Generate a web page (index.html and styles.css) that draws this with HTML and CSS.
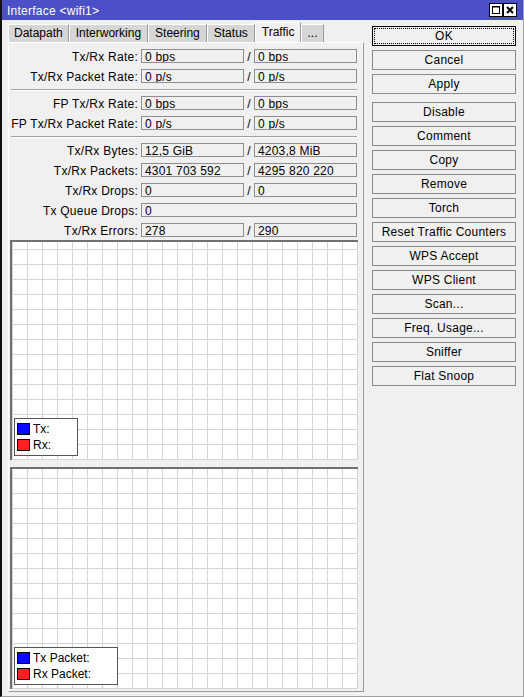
FILE: index.html
```html
<!DOCTYPE html>
<html>
<head>
<meta charset="utf-8">
<title>Interface &lt;wifi1&gt;</title>
<link rel="stylesheet" href="styles.css">
</head>
<body>
<div class="win">
  <div class="titlebar">
    <span class="title">Interface &lt;wifi1&gt;</span>
    <div class="tb-btns">
      <span class="tb-btn"><svg width="12" height="12" viewBox="0 0 12 12"><rect x="2.5" y="2.5" width="7" height="7" fill="none" stroke="#000" stroke-width="1"/><line x1="2" y1="3" x2="10" y2="3" stroke="#000" stroke-width="1"/></svg></span>
      <span class="tb-btn"><svg width="12" height="12" viewBox="0 0 12 12"><path d="M3 3 L9 9 M9 3 L3 9" stroke="#000" stroke-width="2" fill="none"/></svg></span>
    </div>
  </div>
  <div class="main">
    <div class="left">
      <div class="tabs">
        <div class="tab first">Datapath</div>
        <div class="tab">Interworking</div>
        <div class="tab">Steering</div>
        <div class="tab">Status</div>
        <div class="tab active">Traffic</div>
        <div class="tab more">...</div>
      </div>
      <div class="panel">
        <div class="rows">
          <div class="row"><div class="lbl">Tx/Rx Rate:</div><div class="fld">0 bps</div><div class="slash">/</div><div class="fld">0 bps</div></div>
          <div class="row"><div class="lbl">Tx/Rx Packet Rate:</div><div class="fld">0 p/s</div><div class="slash">/</div><div class="fld">0 p/s</div></div>
          <div class="sep"></div>
          <div class="row"><div class="lbl">FP Tx/Rx Rate:</div><div class="fld">0 bps</div><div class="slash">/</div><div class="fld">0 bps</div></div>
          <div class="row"><div class="lbl">FP Tx/Rx Packet Rate:</div><div class="fld">0 p/s</div><div class="slash">/</div><div class="fld">0 p/s</div></div>
          <div class="sep"></div>
          <div class="row"><div class="lbl">Tx/Rx Bytes:</div><div class="fld">12,5 GiB</div><div class="slash">/</div><div class="fld">4203,8 MiB</div></div>
          <div class="row"><div class="lbl">Tx/Rx Packets:</div><div class="fld">4301 703 592</div><div class="slash">/</div><div class="fld">4295 820 220</div></div>
          <div class="row"><div class="lbl">Tx/Rx Drops:</div><div class="fld">0</div><div class="slash">/</div><div class="fld">0</div></div>
          <div class="row"><div class="lbl">Tx Queue Drops:</div><div class="fld wide">0</div></div>
          <div class="row"><div class="lbl">Tx/Rx Errors:</div><div class="fld">278</div><div class="slash">/</div><div class="fld">290</div></div>
        </div>
        <div class="graph g1">
          <div class="legend">
            <div class="li"><span class="sw tx"></span><span>Tx:</span></div>
            <div class="li"><span class="sw rx"></span><span>Rx:</span></div>
          </div>
        </div>
        <div class="graph g2">
          <div class="legend">
            <div class="li"><span class="sw tx"></span><span>Tx Packet:</span></div>
            <div class="li"><span class="sw rx"></span><span>Rx Packet:</span></div>
          </div>
        </div>
      </div>
    </div>
    <div class="btns">
      <button class="btn ok">OK</button>
      <button class="btn">Cancel</button>
      <button class="btn">Apply</button>
      <button class="btn gap">Disable</button>
      <button class="btn">Comment</button>
      <button class="btn">Copy</button>
      <button class="btn">Remove</button>
      <button class="btn">Torch</button>
      <button class="btn">Reset Traffic Counters</button>
      <button class="btn">WPS Accept</button>
      <button class="btn">WPS Client</button>
      <button class="btn">Scan...</button>
      <button class="btn">Freq. Usage...</button>
      <button class="btn">Sniffer</button>
      <button class="btn">Flat Snoop</button>
    </div>
  </div>
</div>
</body>
</html>
```

FILE: styles.css
```css
* { box-sizing: border-box; }
html, body { margin: 0; padding: 0; }
body {
  width: 524px;
  height: 697px;
  overflow: hidden;
  background: #f0f0f0;
  font-family: "Liberation Sans", Arial, sans-serif;
  font-size: 12px;
  color: #000;
}
.win {
  height: 697px;
  border-left: 2px solid #111;
  border-right: 1px solid #a0a0a0;
  border-bottom: 1px solid #a0a0a0;
  display: flex;
  flex-direction: column;
}
.titlebar {
  height: 20px;
  flex: none;
  background: #4b4fc8;
  color: #fff;
  display: flex;
  align-items: center;
  justify-content: space-between;
  padding: 0 6px 0 5px;
}
.title {
  line-height: 20px;
  padding-top: 1px;
  letter-spacing: 0.25px;
}
.tb-btns { display: flex; }
.tb-btn {
  width: 14px;
  height: 14px;
  background: #fff;
  border: 1px solid #000;
  display: flex;
  align-items: center;
  justify-content: center;
}
.main {
  display: flex;
  padding: 2px 0 0 6px;
  flex: 1;
}
.left {
  width: 356px;
  display: flex;
  flex-direction: column;
}
.tabs {
  display: flex;
  height: 20px;
  align-items: flex-end;
}
.tab {
  height: 18px;
  line-height: 17px;
  padding: 0 6px;
  background: #d6d6d6;
  border-top: 1px solid #fff;
  border-left: 1px solid #fff;
  border-right: 1px solid #9a9a9a;
  white-space: nowrap;
}
.tab.first { padding: 0 5px; }
.tab.active {
  height: 20px;
  line-height: 19px;
  background: #f0f0f0;
}
.tab.more { padding: 0 5px; }
.panel {
  border-top: 1px solid #fff;
  border-left: 1px solid #fff;
  border-right: 1px solid #9a9a9a;
  border-bottom: 1px solid #9a9a9a;
  padding: 6px 0 2px 0;
}
.rows { display: flex; flex-direction: column; }
.row {
  display: flex;
  height: 14px;
  margin-bottom: 6px;
}
.row:last-child { margin-bottom: 3px; }
.lbl {
  width: 132px;
  text-align: right;
  padding: 1px 3px 0 0;
  line-height: 14px;
  white-space: nowrap;
  letter-spacing: 0.25px;
}
.fld {
  width: 103px;
  height: 14px;
  border: 1px solid #8e8e8e;
  padding: 1px 0 0 3px;
  line-height: 12px;
  white-space: nowrap;
  overflow: hidden;
  letter-spacing: 0.2px;
}
.fld.wide { width: 216px; }
.slash {
  width: 10px;
  text-align: center;
  line-height: 14px;
  padding-top: 1px;
}
.sep {
  height: 2px;
  border-top: 1px solid #a0a0a0;
  border-bottom: 1px solid #fff;
  margin: 0 6px 5px 2px;
}
.graph {
  position: relative;
  margin-left: 1px;
  width: 348px;
  height: 220px;
  border-top: 2px solid #6f6f6f;
  border-left: 2px solid #6f6f6f;
  background-color: #fff;
  background-image:
    linear-gradient(to right, transparent 14px, #d4d4d4 14px),
    linear-gradient(to bottom, transparent 14px, #d4d4d4 14px);
  background-size: 15px 15px;
  background-position: right bottom;
}
.graph.g2 {
  height: 222px;
  margin-top: 7px;
}
.legend {
  position: absolute;
  left: 2px;
  bottom: 4px;
  background: #fff;
  border: 1px solid #555;
  padding: 4px 26px 0 2px;
}
.li {
  display: flex;
  align-items: flex-start;
  height: 16px;
  line-height: 12px;
  white-space: nowrap;
}
.sw {
  width: 13px;
  height: 12px;
  border: 1px solid #000;
  margin-right: 3px;
  flex: none;
}
.sw.tx { background: #0a0aff; }
.sw.rx { background: #ff2020; }
.btns {
  margin-left: 8px;
  padding-top: 4px;
  width: 144px;
  display: flex;
  flex-direction: column;
  gap: 4px;
}
.btn {
  height: 20px;
  padding: 0;
  margin: 0;
  border: 1px solid #8a8a8a;
  background: #f0f0f0;
  font: inherit;
  color: #000;
  text-align: center;
  line-height: 16px;
  letter-spacing: 0.25px;
}
.btn.ok {
  border-color: #000;
  outline: 1px dotted #000;
  outline-offset: -3px;
}
.btn.gap { margin-top: 4px; }
```
